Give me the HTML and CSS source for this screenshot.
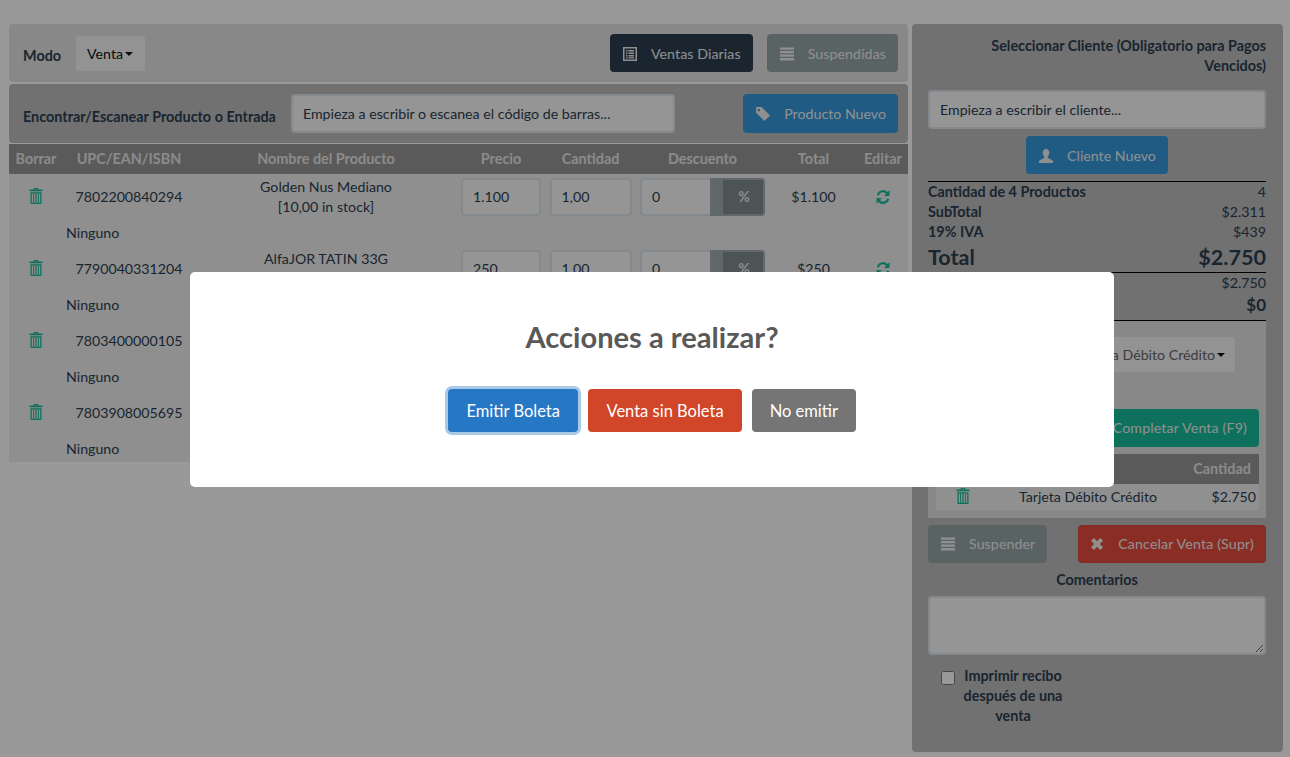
FILE: index.html
```html
<!DOCTYPE html>
<html lang="es">
<head>
    <meta charset="UTF-8">
    <title>Ventas</title>
    <link rel="stylesheet" href="styles.css">
</head>
<body>
    <svg class="sprites" width="0" height="0">
        <symbol id="i-trash" viewBox="0 0 14 16"><path d="M5 0h4l.6 1.600H13.500V3.200H.5V1.600H4.400zM5.700 1.600h2.600L8 .9H6zM1.500 4.200h11V16h-11zM2.800 5.400v9.400h1.300V5.400zM5.100 5.400v9.400h1.300V5.400zM7.600 5.400v9.400h1.300V5.400zM9.900 5.400v9.400h1.300V5.400z" fill-rule="evenodd"/></symbol>
        <symbol id="i-list" viewBox="0 0 14 14"><path d="M0 0h14v14H0zM1.500 1.500v11h11v-11zM3 3h1.500v1.500H3zM5.500 3H11v1.500H5.500zM3 5.500h1.500V7H3zM5.500 5.500H11V7H5.500zM3 8h1.500v1.500H3zM5.500 8H11v1.500H5.500zM3 10.200h1.500v1.300H3zM5.500 10.200H11v1.300H5.500z" fill-rule="evenodd"/></symbol>
        <symbol id="i-lines" viewBox="0 0 15 14"><path d="M0 0h15v2.400H0zM0 3.800h15v2.400H0zM0 7.600h15V10H0zM0 11.400h15V14H0z"/></symbol>
        <symbol id="i-tag" viewBox="0 0 15 15"><path d="M0 1.200Q0 0 1.200 0H6l9 9-6 6-9-9zM3 2a1.300 1.300 0 1 0 .01 0z" fill-rule="evenodd"/></symbol>
        <symbol id="i-user" viewBox="0 0 15 15"><path d="M7.500 0C10 0 11 2 11 4c0 2-1 3.500-1.800 4.300V9.500L15 12.500V15H0v-2.500L5.800 9.500V8.300C5 7.500 4 6 4 4c0-2 1-4 3.500-4z"/></symbol>
        <symbol id="i-x" viewBox="0 0 12 12"><path d="M2.800 0 6 3.200 9.200 0 12 2.800 8.800 6 12 9.200 9.200 12 6 8.800 2.800 12 0 9.200 3.200 6 0 2.800z"/></symbol>
        <symbol id="i-refresh" viewBox="0 0 14 14"><path d="M7 0c2 0 3.500.8 4.600 2L13.500.3V6H8l2-2C9.200 3 8.200 2.300 7 2.300 5 2.300 3.500 3.500 2.900 5.500L.7 5C1.500 2.200 4 0 7 0zM.5 8H6L4 10c.8 1 1.800 1.700 3 1.700 2 0 3.500-1.200 4.100-3.200l2.200.5C12.500 11.800 10 14 7 14c-2 0-3.500-.8-4.600-2L.5 13.700z"/></symbol>
    </svg>

    <div class="page">
        <div class="left-col">
            <div class="panel panel-mode">
                <label class="lbl">Modo</label>
                <span class="dropdown">Venta<i class="caret"></i></span>
                <div class="spacer"></div>
                <a class="btn btn-dark"><svg class="ico"><use href="#i-list"/></svg>Ventas Diarias</a>
                <a class="btn btn-grey"><svg class="ico"><use href="#i-lines"/></svg>Suspendidas</a>
            </div>
            <div class="panel panel-scan">
                <label class="lbl">Encontrar/Escanear Producto o Entrada</label>
                <div class="field field-scan">Empieza a escribir o escanea el código de barras...</div>
                <div class="spacer"></div>
                <a class="btn btn-blue"><svg class="ico"><use href="#i-tag"/></svg>Producto Nuevo</a>
            </div>

            <table class="items">
                <colgroup>
                    <col class="c1"><col class="c2"><col class="c3"><col class="c4">
                    <col class="c5"><col class="c6"><col class="c7"><col class="c8">
                </colgroup>
                <thead>
                    <tr><th>Borrar</th><th>UPC/EAN/ISBN</th><th>Nombre del Producto</th><th>Precio</th><th>Cantidad</th><th>Descuento</th><th>Total</th><th>Editar</th></tr>
                </thead>
                <tbody>
                    <tr class="row-main">
                        <td><svg class="trash"><use href="#i-trash"/></svg></td>
                        <td>7802200840294</td>
                        <td>Golden Nus Mediano<br>[10,00 in stock]</td>
                        <td><div class="cell-input">1.100</div></td>
                        <td><div class="cell-input qty">1,00</div></td>
                        <td><div class="disc"><div class="cell-input">0</div><span class="disc-btn"><b>%</b></span></div></td>
                        <td>$1.100</td>
                        <td><svg class="refresh"><use href="#i-refresh"/></svg></td>
                    </tr>
                    <tr class="row-sub"><td></td><td class="serial">Ninguno</td><td colspan="6"></td></tr>
                    <tr class="row-main">
                        <td><svg class="trash"><use href="#i-trash"/></svg></td>
                        <td>7790040331204</td>
                        <td>AlfaJOR TATIN 33G<br>&nbsp;</td>
                        <td><div class="cell-input">250</div></td>
                        <td><div class="cell-input qty">1,00</div></td>
                        <td><div class="disc"><div class="cell-input">0</div><span class="disc-btn"><b>%</b></span></div></td>
                        <td>$250</td>
                        <td><svg class="refresh"><use href="#i-refresh"/></svg></td>
                    </tr>
                    <tr class="row-sub"><td></td><td class="serial">Ninguno</td><td colspan="6"></td></tr>
                    <tr class="row-main">
                        <td><svg class="trash"><use href="#i-trash"/></svg></td>
                        <td>7803400000105</td>
                        <td colspan="6"></td>
                    </tr>
                    <tr class="row-sub"><td></td><td class="serial">Ninguno</td><td colspan="6"></td></tr>
                    <tr class="row-main">
                        <td><svg class="trash"><use href="#i-trash"/></svg></td>
                        <td>7803908005695</td>
                        <td colspan="6"></td>
                    </tr>
                    <tr class="row-sub"><td></td><td class="serial">Ninguno</td><td colspan="6"></td></tr>
                </tbody>
            </table>
        </div>

        <div class="panel right-col">
            <label class="client-label">Seleccionar Cliente (Obligatorio para Pagos Vencidos)</label>
            <div class="field field-client">Empieza a escribir el cliente...</div>
            <div class="center-row"><a class="btn btn-blue"><svg class="ico"><use href="#i-user"/></svg>Cliente Nuevo</a></div>

            <div class="summary">
                <div class="sum-row bold"><span>Cantidad de 4 Productos</span><span>4</span></div>
                <div class="sum-row bold"><span>SubTotal</span><span>$2.311</span></div>
                <div class="sum-row bold"><span>19% IVA</span><span>$439</span></div>
                <div class="sum-row sum-total"><span>Total</span><span>$2.750</span></div>
            </div>
            <div class="summary summary-due">
                <div class="sum-row bold"><span></span><span>$2.750</span></div>
                <div class="sum-row sum-due"><span></span><span>$0</span></div>
            </div>

            <div class="pay-box">
                <div class="pay-type"><span class="dropdown dropdown-pay">Tarjeta Débito Crédito<i class="caret"></i></span></div>
                <a class="btn btn-green">Completar Venta (F9)</a>
                <table class="pays">
                    <colgroup><col class="p1"><col class="p2"><col class="p3"></colgroup>
                    <thead><tr><th></th><th></th><th class="amount">Cantidad</th></tr></thead>
                    <tbody>
                        <tr>
                            <td><svg class="trash"><use href="#i-trash"/></svg></td>
                            <td>Tarjeta Débito Crédito</td>
                            <td class="amount">$2.750</td>
                        </tr>
                    </tbody>
                </table>
            </div>

            <div class="action-row">
                <a class="btn btn-grey"><svg class="ico"><use href="#i-lines"/></svg>Suspender</a>
                <a class="btn btn-red"><svg class="ico ico-x"><use href="#i-x"/></svg>Cancelar Venta (Supr)</a>
            </div>

            <label class="comment-label">Comentarios</label>
            <textarea class="comments"></textarea>

            <div class="print-row">
                <input type="checkbox" class="print-check">
                <label class="print-label">Imprimir recibo después de una venta</label>
            </div>
        </div>
    </div>

    <div class="overlay">
        <div class="modal">
            <h2 class="modal-title">Acciones a realizar?</h2>
            <div class="modal-actions">
                <button class="mbtn mbtn-blue">Emitir Boleta</button>
                <button class="mbtn mbtn-red">Venta sin Boleta</button>
                <button class="mbtn mbtn-grey">No emitir</button>
            </div>
        </div>
    </div>
</body>
</html>
```

FILE: styles.css
```css
/* General */
* {
    box-sizing: border-box;
}

html, body {
    height: 100%;
    margin: 0;
    overflow: hidden;
}

body {
    background: #fff;
    color: #2c3e50;
    font-family: Lato, "Open Sans", sans-serif;
    font-size: 14.2px;
    line-height: 20px;
}

label, th, .bold span:first-child {
    font-size: 14.4px;
    font-weight: 700;
}

.sprites {
    position: absolute;
}

.page {
    display: flex;
    gap: 4px;
    padding: 24px 7px 5px 9px;
    align-items: flex-start;
}

.left-col {
    width: 899px;
}

.panel {
    background: #e3e3e3;
    border-radius: 4px;
}

.panel-mode {
    display: flex;
    align-items: center;
    height: 58px;
    padding: 0 10px 0 14px;
    margin-bottom: 2px;
}

.panel-scan {
    display: flex;
    align-items: center;
    height: 59px;
    padding: 0 10px 0 14px;
    margin-bottom: 1px;
    background: #bdbdbd;
}

.spacer {
    flex: 1;
}

.lbl {
    position: relative;
    top: 3px;
}

.dropdown {
    display: inline-flex;
    align-items: center;
    height: 35px;
    padding: 1px 12px 0 11px;
    margin-left: 15px;
    background: #f5f5f5;
    border-radius: 2px;
    color: #111;
}

.caret {
    border-top: 4px solid #111;
    border-left: 4px solid transparent;
    border-right: 4px solid transparent;
    margin-left: 2px;
}

.field {
    background: #f8f8f8;
    border: 2px solid #dce4ec;
    border-radius: 4px;
    height: 39px;
    line-height: 35px;
    padding: 0 10px;
}

.field-scan {
    width: 384px;
    margin-left: 15px;
}

.field-client {
    margin-bottom: 7px;
}

/* Buttons */
.btn {
    display: inline-flex;
    align-items: center;
    height: 38px;
    padding: 0 12px;
    border-radius: 4px;
    color: #f0f0f0;
    white-space: nowrap;
}

.panel-mode .btn, .center-row .btn {
    padding-top: 1px;
}

.btn-dark {
    background: #2c3e50;
    margin-right: 14px;
    letter-spacing: 0.08px;
}

.btn-grey {
    background: #95a5a6;
    letter-spacing: 0.08px;
}

.btn-blue {
    background: #3498db;
    height: 39px;
}

.center-row .btn-blue {
    height: 38px;
}

.btn-green {
    background: #18bc9c;
    justify-content: flex-end;
    letter-spacing: 0.15px;
}

.btn-red {
    background: #e74c3c;
    letter-spacing: 0.16px;
}

.ico {
    width: 14px;
    height: 14px;
    fill: currentColor;
    margin-right: 14px;
    margin-left: 1px;
}

.ico-x {
    width: 12px;
    height: 12px;
    margin-left: 1px;
    margin-right: 15px;
}

/* Items table */
.items {
    width: 899px;
    table-layout: fixed;
    border-collapse: collapse;
    background: #eee;
}

.c1 { width: 54px; }
.c2 { width: 132px; }
.c3 { width: 262px; }
.c4 { width: 88px; }
.c5 { width: 91px; }
.c6 { width: 133px; }
.c7 { width: 89px; }
.c8 { width: 50px; }

.items th {
    background: #969696;
    color: #e8e8e8;
    height: 30px;
    padding: 0;
    white-space: nowrap;
}

.items td {
    padding: 0;
    text-align: center;
    vertical-align: middle;
}

.row-main {
    height: 46px;
}

.row-sub {
    height: 26px;
}

.items td.serial {
    text-align: left;
    padding-left: 3px;
}

.cell-input {
    height: 38px;
    width: 80px;
    margin: 0 auto;
    background: #f8f8f8;
    border: 2px solid #dce4ec;
    border-radius: 4px;
    line-height: 34px;
    padding-left: 10px;
    text-align: left;
}

.qty {
    width: 82px;
}

.disc {
    display: flex;
    width: 125px;
    margin: 0 auto;
}

.disc .cell-input {
    width: 70px;
    border-radius: 4px 0 0 4px;
    border-right: 0;
    margin: 0;
}

.disc-btn {
    width: 55px;
    height: 38px;
    background: #a0aeb0;
    border-radius: 0 4px 4px 0;
    padding: 2px 2px 2px 13px;
}

.disc-btn b {
    display: block;
    height: 34px;
    line-height: 34px;
    background: #7f8c8d;
    color: #e8e8e8;
    padding-left: 2px;
    text-align: center;
}

.trash {
    width: 14px;
    height: 16px;
    fill: #18bc9c;
    display: block;
    margin: -3px auto 0;
}

.refresh {
    width: 14px;
    height: 14px;
    fill: #18bc9c;
    display: block;
    margin: -1px auto 0;
}

/* Right column */
.right-col {
    width: 371px;
    height: 728px;
    padding: 12px 17px 0 16px;
    background: #bdbdbd;
}

.client-label {
    display: block;
    text-align: right;
    margin-bottom: 14px;
}

.center-row {
    text-align: center;
    height: 45px;
}

.summary {
    border-top: 1px solid #000;
}

.sum-row {
    display: flex;
    justify-content: space-between;
}

.sum-total {
    font-size: 21.6px;
    font-weight: 700;
    line-height: 30px;
}

.summary-due {
    border-bottom: 1px solid #000;
}

.sum-due {
    font-size: 17px;
    font-weight: 700;
    line-height: 24px;
    padding-bottom: 3px;
}

.pay-box {
    background: #e3e3e3;
    height: 197px;
    padding: 16px 7px 8px 8px;
}

.pay-type {
    height: 72px;
    text-align: right;
}

.dropdown-pay {
    margin: 0 24px 0 0;
    width: 295px;
    justify-content: flex-end;
    padding: 0 10px;
    color: #666;
}

.pay-box .btn-green {
    display: flex;
    padding-right: 12px;
}

.pays {
    width: 323px;
    margin-top: 7px;
    table-layout: fixed;
    border-collapse: collapse;
    background: #f0f0f0;
}

.p1 { width: 54px; }
.p2 { width: 196px; }
.p3 { width: 73px; }

.pays th {
    background: #969696;
    color: #e8e8e8;
    height: 30px;
    padding: 0 8px 0 3px;
}

.pays td {
    height: 26px;
    padding: 0 3px;
    text-align: center;
}

.pays .amount {
    text-align: right;
    white-space: nowrap;
}

.action-row {
    display: flex;
    justify-content: space-between;
    margin-top: 7px;
}

.comment-label {
    display: block;
    text-align: center;
    margin-top: 7px;
    margin-bottom: 6px;
}

.comments {
    display: block;
    width: 100%;
    height: 59px;
    background: #f8f8f8;
    border: 2px solid #dce4ec;
    border-radius: 4px;
}

.print-row {
    display: flex;
    align-items: flex-start;
    margin-top: 11px;
    padding-left: 13px;
}

.print-check {
    width: 14px;
    height: 14px;
    margin: 5px 8px 0 0;
}

.print-label {
    width: 100px;
    text-align: center;
}

/* Dialog */
.overlay {
    position: fixed;
    inset: 0;
    display: flex;
    align-items: center;
    justify-content: center;
    padding: 2px 0 0 14px;
    background: rgba(0, 0, 0, 0.4);
}

.modal {
    width: 924px;
    height: 215px;
    background: #fff;
    border-radius: 5px;
    text-align: center;
}

.modal-title {
    margin: 0;
    padding-top: 46px;
    color: #595959;
    font-size: 29.1px;
    font-weight: 700;
    line-height: 38px;
}

.modal-actions {
    display: flex;
    justify-content: center;
    gap: 10px;
    margin-top: 33px;
}

.mbtn {
    height: 43px;
    padding: 0 18px;
    border: 0;
    border-radius: 4px;
    color: #fff;
    font-family: Lato, "Open Sans", sans-serif;
    font-size: 16.5px;
}

.mbtn-blue {
    background: #2778c4;
    box-shadow: 0 0 0 3px rgba(39, 120, 196, 0.4);
    padding: 0 18.5px;
}

.mbtn-red {
    background: #d14529;
}

.mbtn-grey {
    background: #757575;
}
```
